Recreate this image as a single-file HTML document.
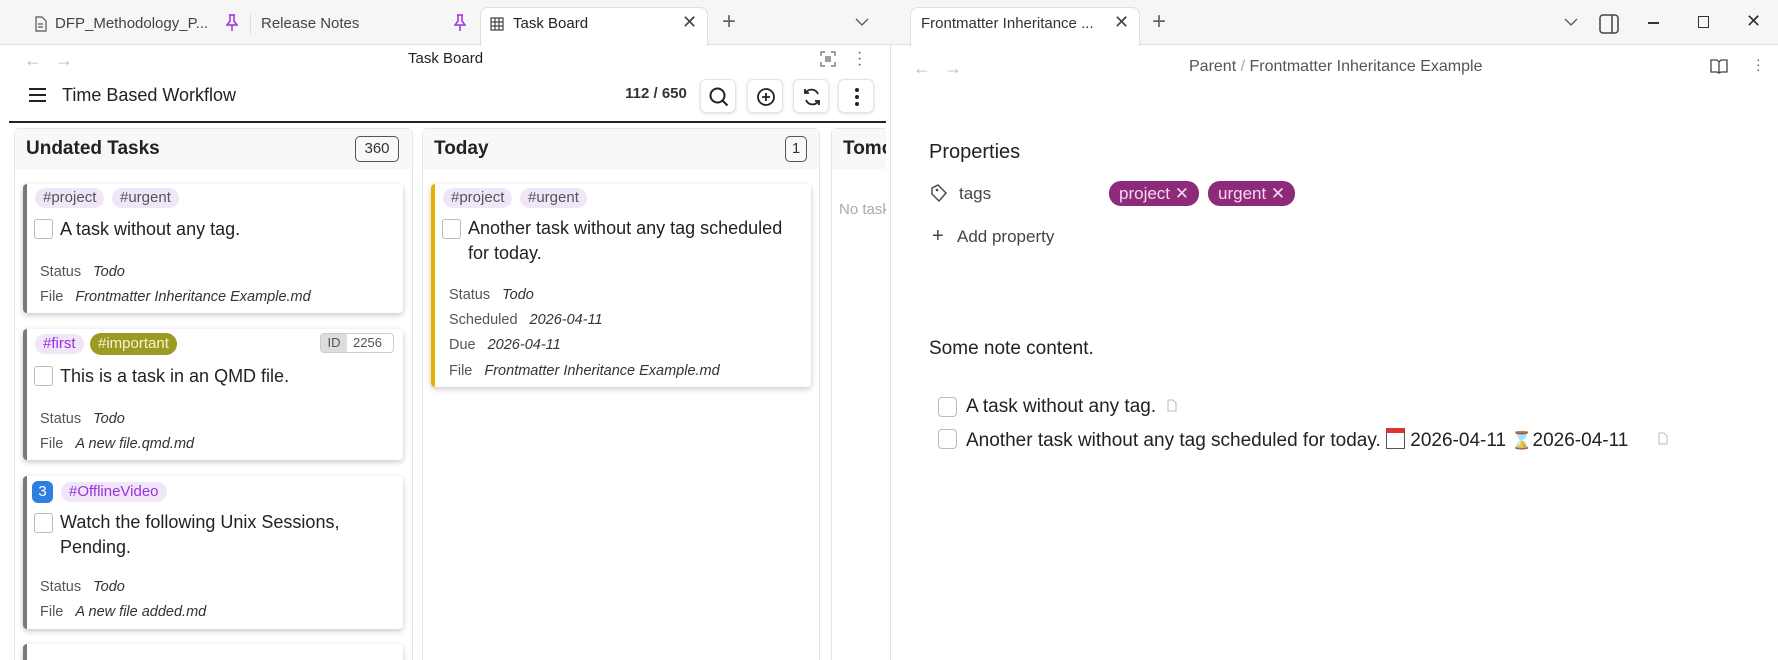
<!DOCTYPE html>
<html style="overflow:hidden;height:660px"><head><meta charset="utf-8"><style>
*{box-sizing:border-box;margin:0;padding:0}
body{width:1778px;height:660px;overflow:hidden;background:#fff;font-family:"Liberation Sans",sans-serif;color:#222;position:relative}
.a{position:absolute;white-space:nowrap}
.tabbar{position:absolute;left:0;top:0;width:1778px;height:45px;background:#f6f6f6;border-bottom:1px solid #e0e0e0}
.tab{position:absolute;top:7px;height:39px;background:#fff;border:1px solid #e0e0e0;border-bottom:none;border-radius:8px 8px 0 0}
.btn{position:absolute;top:79px;width:36px;height:34px;border:1px solid #e4e4e4;border-radius:6px;background:#fff;box-shadow:0 1px 3px rgba(0,0,0,.12)}
.col{position:absolute;top:128px;height:540px;background:#fff;border:1px solid #e6e6e6;border-radius:5px}
.colh{position:absolute;left:0;top:0;right:0;height:40px;background:#f8f8f8}
.card{position:absolute;background:#fff;border-radius:4px;box-shadow:0 2px 6px rgba(0,0,0,.22);border-left:4px solid #7a7a7a}
.tag{position:absolute;height:20px;line-height:20px;padding:0 8px;border-radius:10px;background:#efe6f8;color:#555;font-size:15px}
.cb{position:absolute;width:19px;height:20px;border:1px solid #bbb;border-radius:3px;background:#fff}
.tt{position:absolute;font-size:18px;color:#222;line-height:24px}
.ml{position:absolute;font-size:14.5px;color:#555}
.mv{font-style:italic;color:#333;margin-left:12px}
.pill{position:absolute;top:181px;height:25px;line-height:25px;padding:0 10px;border-radius:12px;background:#8e2a7a;color:#f6d8ee;font-size:17px}
</style></head><body>
<div class="tabbar"></div>
<svg class="a" style="left:34px;top:16px" width="13" height="16" viewBox="0 0 13 16"><path d="M2 1h6l4 4v10H2z M4 8h5 M4 11h5" fill="none" stroke="#555" stroke-width="1.2"/></svg>
<div class="a" style="left:55px;top:15px;font-size:15px;color:#444">DFP_Methodology_P...</div>
<svg class="a" style="left:226px;top:14px" width="12" height="18" viewBox="0 0 12 18"><path d="M3 1h6M4 1v6L1 11h10L8 7V1M6 11v6" fill="none" stroke="#9b30e0" stroke-width="1.5"/></svg>
<div class="a" style="left:250px;top:14px;width:1px;height:20px;background:#ddd"></div>
<div class="a" style="left:261px;top:15px;font-size:15px;color:#444">Release Notes</div>
<svg class="a" style="left:454px;top:14px" width="12" height="18" viewBox="0 0 12 18"><path d="M3 1h6M4 1v6L1 11h10L8 7V1M6 11v6" fill="none" stroke="#9b30e0" stroke-width="1.5"/></svg>
<div class="tab" style="left:480px;width:228px"></div>
<svg class="a" style="left:490px;top:17px" width="14" height="14" viewBox="0 0 14 14"><path d="M1 1h12v12H1zM1 5h12M1 9h12M5 1v12M9 1v12" fill="none" stroke="#444" stroke-width="1.2"/></svg>
<div class="a" style="left:513px;top:15px;font-size:15px;color:#222">Task Board</div>
<div class="a" style="left:682px;top:12px;font-size:18px;color:#444">✕</div>
<div class="a" style="left:722px;top:8px;font-size:24px;color:#666;font-weight:300">+</div>
<svg class="a" style="left:855px;top:17px" width="14" height="10" viewBox="0 0 14 10"><path d="M1 2l6 6 6-6" fill="none" stroke="#555" stroke-width="1.3"/></svg>
<div class="a" style="left:24px;top:50px;font-size:18px;color:#bbb">←</div>
<div class="a" style="left:55px;top:50px;font-size:18px;color:#bbb">→</div>
<div class="a" style="left:408px;top:50px;font-size:15px;color:#222">Task Board</div>
<svg class="a" style="left:820px;top:51px" width="16" height="16" viewBox="0 0 16 16"><path d="M1 5V1h4M11 1h4v4M15 11v4h-4M5 15H1v-4M5 6h6M5 8h6M5 10h6" fill="none" stroke="#666" stroke-width="1.2"/></svg>
<div class="a" style="left:857px;top:50px;font-size:16px;color:#555;line-height:6px">·<br>·<br>·</div>
<svg class="a" style="left:29px;top:88px" width="17" height="14" viewBox="0 0 17 14"><path d="M0 1h17M0 7h17M0 13h17" stroke="#222" stroke-width="2"/></svg>
<div class="a" style="left:62px;top:85px;font-size:18px;color:#222">Time Based Workflow</div>
<div class="a" style="left:616px;top:80px;width:80px;height:28px;background:#fff;border-radius:6px;font-size:15px;font-weight:bold;color:#333;line-height:28px;text-align:center">112 / 650</div>
<div class="btn" style="left:700px"><svg style="position:absolute;left:8px;top:7px" width="20" height="20" viewBox="0 0 20 20"><circle cx="8.5" cy="8.5" r="7" fill="none" stroke="#222" stroke-width="2"/><path d="M13.5 13.5l5 5" stroke="#222" stroke-width="2"/></svg></div>
<div class="btn" style="left:747px"><svg style="position:absolute;left:8px;top:7px" width="20" height="20" viewBox="0 0 20 20"><circle cx="10" cy="10" r="8" fill="none" stroke="#222" stroke-width="1.8"/><path d="M10 6v8M6 10h8" stroke="#222" stroke-width="1.8"/></svg></div>
<div class="btn" style="left:793px"><svg style="position:absolute;left:8px;top:7px" width="20" height="20" viewBox="0 0 20 20"><path d="M16 7A7 7 0 0 0 3.5 6M3 2v4h4M4 13a7 7 0 0 0 12.5 1M17 18v-4h-4" fill="none" stroke="#222" stroke-width="1.8"/></svg></div>
<div class="btn" style="left:838px"><svg style="position:absolute;left:15px;top:7px" width="6" height="20" viewBox="0 0 6 20"><circle cx="3" cy="3" r="2" fill="#222"/><circle cx="3" cy="10" r="2" fill="#222"/><circle cx="3" cy="17" r="2" fill="#222"/></svg></div>
<div class="a" style="left:9px;top:121px;width:877px;height:2px;background:#222"></div>
<div class="col" style="left:14px;width:399px"><div class="colh"></div></div>
<div class="a" style="left:26px;top:138px;font-size:19px;font-weight:bold;color:#222">Undated Tasks</div>
<div class="a" style="left:355px;top:136px;width:44px;height:26px;border:1px solid #555;border-radius:5px;font-size:15px;text-align:center;line-height:24px;color:#333">360</div>
<div class="col" style="left:422px;width:398px"><div class="colh"></div></div>
<div class="a" style="left:434px;top:138px;font-size:19px;font-weight:bold;color:#222">Today</div>
<div class="a" style="left:785px;top:136px;width:22px;height:26px;border:1px solid #555;border-radius:5px;font-size:15px;text-align:center;line-height:24px;color:#333">1</div>
<div class="col" style="left:831px;width:80px"><div class="colh"></div></div>
<div class="a" style="left:843px;top:138px;font-size:19px;font-weight:bold;color:#222">Tomorrow</div>
<div class="a" style="left:839px;top:201px;font-size:15px;color:#aaa">No tasks</div>
<div class="a" style="left:886px;top:123px;width:892px;height:537px;background:#fff"></div>
<div class="a" style="left:890px;top:45px;width:1px;height:615px;background:#e2e2e2"></div>
<div class="card" style="left:23px;top:184px;width:380px;height:129px"></div>
<div class="tag" style="left:35px;top:188px">#project</div>
<div class="tag" style="left:112px;top:188px">#urgent</div>
<div class="cb" style="left:34px;top:219px"></div>
<div class="tt" style="left:60px;top:217px">A task without any tag.</div>
<div class="ml" style="left:40px;top:264px">Status<span class="mv">Todo</span></div>
<div class="ml" style="left:40px;top:289px">File<span class="mv">Frontmatter Inheritance Example.md</span></div>
<div class="card" style="left:23px;top:329px;width:380px;height:131px"></div>
<div class="tag" style="left:35px;top:334px;color:#9b30e0">#first</div>
<div class="tag" style="left:90px;top:333px;height:22px;line-height:22px;background:#9c9a22;color:#f4f4d0;border-radius:11px">#important</div>
<div class="a" style="left:320px;top:333px;width:74px;height:20px;border:1px solid #ccc;border-radius:4px;font-size:13px;line-height:18px;color:#555;overflow:hidden"><span style="display:inline-block;width:26px;background:#ddd;text-align:center">ID</span><span style="padding-left:6px">2256</span></div>
<div class="cb" style="left:34px;top:366px"></div>
<div class="tt" style="left:60px;top:364px">This is a task in an QMD file.</div>
<div class="ml" style="left:40px;top:411px">Status<span class="mv">Todo</span></div>
<div class="ml" style="left:40px;top:436px">File<span class="mv">A new file.qmd.md</span></div>
<div class="card" style="left:23px;top:476px;width:380px;height:153px"></div>
<div class="a" style="left:32px;top:481px;width:21px;height:22px;background:#2f7fe0;border-radius:6px;color:#fff;font-size:15px;text-align:center;line-height:22px">3</div>
<div class="tag" style="left:61px;top:482px;color:#9b30e0">#OfflineVideo</div>
<div class="cb" style="left:34px;top:513px"></div>
<div class="tt" style="left:60px;top:510px;line-height:25px">Watch the following Unix Sessions,<br>Pending.</div>
<div class="ml" style="left:40px;top:579px">Status<span class="mv">Todo</span></div>
<div class="ml" style="left:40px;top:604px">File<span class="mv">A new file added.md</span></div>
<div class="card" style="left:23px;top:644px;width:380px;height:30px"></div>
<div class="card" style="left:431px;top:184px;width:380px;height:203px;border-left-color:#e8b200"></div>
<div class="tag" style="left:443px;top:188px">#project</div>
<div class="tag" style="left:520px;top:188px">#urgent</div>
<div class="cb" style="left:442px;top:219px"></div>
<div class="tt" style="left:468px;top:216px;line-height:25px">Another task without any tag scheduled<br>for today.</div>
<div class="ml" style="left:449px;top:287px">Status<span class="mv">Todo</span></div>
<div class="ml" style="left:449px;top:312px">Scheduled<span class="mv">2026-04-11</span></div>
<div class="ml" style="left:449px;top:337px">Due<span class="mv">2026-04-11</span></div>
<div class="ml" style="left:449px;top:363px">File<span class="mv">Frontmatter Inheritance Example.md</span></div>
<div class="tab" style="left:910px;width:230px"></div>
<div class="a" style="left:921px;top:15px;font-size:15px;color:#333">Frontmatter Inheritance ...</div>
<div class="a" style="left:1114px;top:12px;font-size:18px;color:#444">✕</div>
<div class="a" style="left:1152px;top:8px;font-size:24px;color:#666;font-weight:300">+</div>
<svg class="a" style="left:1564px;top:17px" width="14" height="10" viewBox="0 0 14 10"><path d="M1 2l6 6 6-6" fill="none" stroke="#555" stroke-width="1.3"/></svg>
<svg class="a" style="left:1599px;top:14px" width="20" height="20" viewBox="0 0 20 20"><rect x="1" y="1" width="18" height="18" rx="3" fill="none" stroke="#444" stroke-width="1.5"/><path d="M13 1v18" stroke="#444" stroke-width="1.5"/></svg>
<div class="a" style="left:1648px;top:22px;width:11px;height:1.5px;background:#333"></div>
<div class="a" style="left:1698px;top:16px;width:11px;height:12px;border:1.5px solid #333"></div>
<div class="a" style="left:1746px;top:11px;font-size:18px;color:#333">✕</div>
<div class="a" style="left:913px;top:58px;font-size:18px;color:#bbb">←</div>
<div class="a" style="left:944px;top:58px;font-size:18px;color:#bbb">→</div>
<div class="a" style="left:1189px;top:58px;font-size:16px;color:#555">Parent <span style="color:#aaa">/</span> Frontmatter Inheritance Example</div>
<svg class="a" style="left:1710px;top:58px" width="18" height="16" viewBox="0 0 18 16"><path d="M1 2h6l2 2 2-2h6v12h-6l-2 1-2-1H1zM9 4v11" fill="none" stroke="#444" stroke-width="1.3"/></svg>
<div class="a" style="left:1756px;top:57px;font-size:14px;color:#555;line-height:5px">·<br>·<br>·</div>
<div class="a" style="left:929px;top:141px;font-size:20px;color:#222">Properties</div>
<svg class="a" style="left:930px;top:184px" width="18" height="20" viewBox="0 0 18 20"><path d="M2 4l6-3 8 8-7 8-7-7z" fill="none" stroke="#444" stroke-width="1.4"/><circle cx="7" cy="6" r="1.3" fill="#444"/></svg>
<div class="a" style="left:959px;top:184px;font-size:17px;color:#444">tags</div>
<div class="pill" style="left:1109px">project ✕</div>
<div class="pill" style="left:1208px">urgent ✕</div>
<div class="a" style="left:932px;top:225px;font-size:20px;color:#444;font-weight:300">+</div>
<div class="a" style="left:957px;top:227px;font-size:17px;color:#444">Add property</div>
<div class="a" style="left:929px;top:338px;font-size:19px;color:#222">Some note content.</div>
<div class="cb" style="left:938px;top:397px;border-radius:4px"></div>
<div class="a" style="left:966px;top:396px;font-size:19px;color:#222">A task without any tag.</div>
<svg class="a" style="left:1167px;top:399px" width="10" height="13" viewBox="0 0 10 13"><path d="M1 1h5l3 3v8H1z" fill="none" stroke="#bbb"/></svg>
<div class="cb" style="left:938px;top:429px;border-radius:4px"></div>
<div class="a" style="left:966px;top:428px;font-size:19px;color:#222">Another task without any tag scheduled for today. <span style="display:inline-block;width:19px;height:21px;border:1px solid #555;border-top:5px solid #d33;vertical-align:-3px;background:#fff"></span> 2026-04-11 <span style="display:inline-block;color:#d80;font-size:17px">⌛</span>2026-04-11</div>
<svg class="a" style="left:1658px;top:432px" width="10" height="13" viewBox="0 0 10 13"><path d="M1 1h5l3 3v8H1z" fill="none" stroke="#bbb"/></svg>
</body></html>
